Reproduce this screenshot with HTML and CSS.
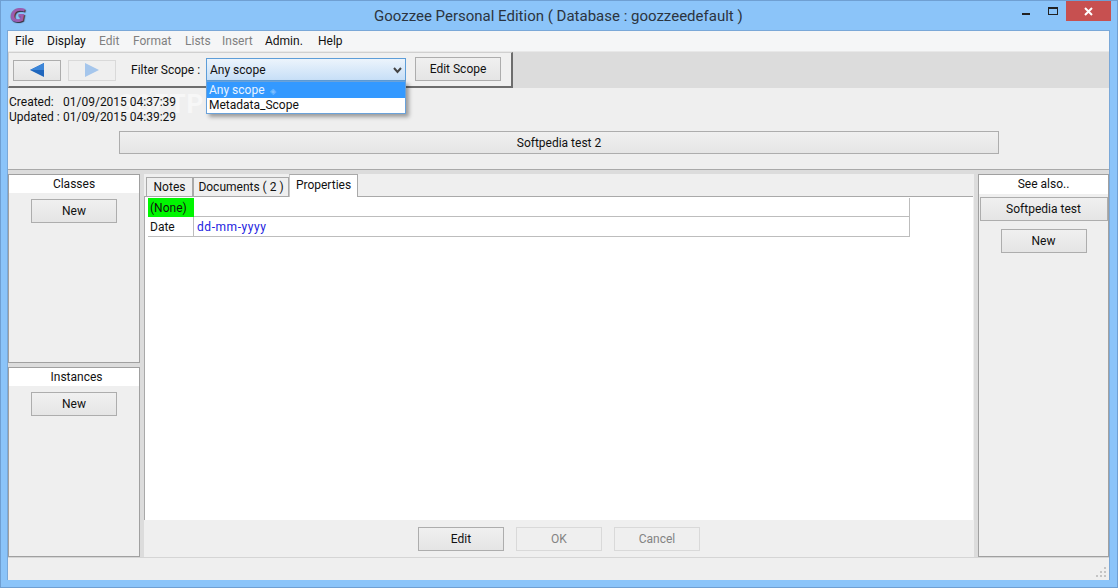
FILE: index.html
```html
<!DOCTYPE html>
<html lang="en">
<head>
<meta charset="utf-8">
<title>Goozzee Personal Edition</title>
<link rel="stylesheet" href="styles.css">
</head>
<body>
<div class="window">
  <header class="titlebar">
    <span class="logo">G</span>
    <h1 class="title">Goozzee Personal Edition ( Database : goozzeedefault )</h1>
    <div class="controls">
      <span class="ctl ctl-min"><i class="min-bar"></i></span>
      <span class="ctl ctl-max"><i class="max-box"></i></span>
      <span class="ctl ctl-close">
        <svg width="9" height="9" viewBox="0 0 9 9"><path d="M1 1l7 7M8 1l-7 7" stroke="#fff" stroke-width="2" fill="none"/></svg>
      </span>
    </div>
  </header>
  <div class="client">
    <nav class="menubar">
      <span class="menu m-file">File</span>
      <span class="menu m-display">Display</span>
      <span class="menu off m-edit">Edit</span>
      <span class="menu off m-format">Format</span>
      <span class="menu off m-lists">Lists</span>
      <span class="menu off m-insert">Insert</span>
      <span class="menu m-admin">Admin.</span>
      <span class="menu">Help</span>
    </nav>
    <div class="toolstrip">
      <div class="toolgroup">
        <button class="btn nav">
          <svg width="14" height="14" viewBox="0 0 14 14"><polygon points="14,0 14,14 0,7" fill="#1f66bd"/><polygon points="14,0 14,7 0,7" fill="#3d86d8"/></svg>
        </button>
        <button class="btn nav disabled">
          <svg width="14" height="14" viewBox="0 0 14 14"><polygon points="0,0 0,14 14,7" fill="#a5c6ec"/></svg>
        </button>
        <span class="filter-label">Filter Scope :</span>
        <div class="combo">
          <span>Any scope</span>
          <svg class="chev" width="9" height="7" viewBox="0 0 9 7"><path d="M1 1l3.5 4L8 1" stroke="#444" stroke-width="2" fill="none"/></svg>
          <ul class="dropdown">
            <li class="sel">Any scope<span class="dia">◈</span></li>
            <li>Metadata_Scope</li>
          </ul>
        </div>
        <button class="btn edit-scope">Edit Scope</button>
      </div>
    </div>
    <section class="info">
      <span class="watermark">SOFTPEDIA</span>
      <div class="stamps">
        <div class="stamp"><span class="stamp-k">Created:</span><span>01/09/2015 04:37:39</span></div>
        <div class="stamp"><span class="stamp-k">Updated :</span><span>01/09/2015 04:39:29</span></div>
      </div>
      <button class="btn name-btn">Softpedia test 2</button>
    </section>
    <main class="columns">
      <aside class="left">
        <section class="panel classes">
          <div class="panel-head">Classes</div>
          <button class="btn new">New</button>
        </section>
        <section class="panel instances">
          <div class="panel-head">Instances</div>
          <button class="btn new">New</button>
        </section>
      </aside>
      <section class="center">
        <div class="center-inner">
          <div class="tabs">
            <span class="tab t-notes">Notes</span>
            <span class="tab t-docs">Documents ( 2 )</span>
            <span class="tab active">Properties</span>
          </div>
          <div class="page">
            <div class="prop-table">
              <div class="cell key none">(None)</div><div class="cell val"></div>
              <div class="cell key">Date</div><div class="cell val link">dd-mm-yyyy</div>
            </div>
          </div>
          <div class="actions">
            <button class="btn act">Edit</button>
            <button class="btn act disabled">OK</button>
            <button class="btn act disabled">Cancel</button>
          </div>
        </div>
      </section>
      <aside class="panel right">
        <div class="panel-head see">See also..</div>
        <button class="btn see-item">Softpedia test</button>
        <button class="btn new see-new">New</button>
      </aside>
    </main>
    <footer class="statusbar">
      <svg class="grip" width="11" height="11" viewBox="0 0 11 11" fill="#c4c4c4"><rect x="8" y="0" width="2" height="2"/><rect x="4" y="4" width="2" height="2"/><rect x="8" y="4" width="2" height="2"/><rect x="0" y="8" width="2" height="2"/><rect x="4" y="8" width="2" height="2"/><rect x="8" y="8" width="2" height="2"/></svg>
    </footer>
  </div>
</div>
</body>
</html>
```
FILE: styles.css
```css
* { box-sizing: border-box; }
html, body { margin: 0; padding: 0; }
body {
  width: 1118px;
  height: 588px;
  overflow: hidden;
  font-family: Roboto, "Noto Sans", sans-serif;
  font-size: 12px;
  color: #111;
}
button { font: inherit; color: inherit; padding: 0; }

.window {
  width: 1118px;
  height: 588px;
  background: #8bc4f9;
  border: 1px solid #6f9fd2;
  display: flex;
  flex-direction: column;
  padding: 0 7px 7px 6px;
}

.titlebar {
  height: 29px;
  flex: none;
  display: flex;
  align-items: flex-start;
  position: relative;
}
.logo {
  width: 18px;
  margin: 4px 0 0 3px;
  font: italic bold 19px/20px "DejaVu Sans", sans-serif;
  color: #9a5cb0;
  text-shadow: 1px 1px 1px #2b2b3a;
}
.title {
  position: absolute;
  left: 367px;
  top: 5px;
  margin: 0;
  font-size: 15px;
  line-height: 20px;
  font-weight: 400;
  color: #2b3440;
  white-space: nowrap;
}
.controls { margin-left: auto; display: flex; margin-right: -1px; }
.ctl { height: 20px; display: flex; align-items: center; justify-content: center; }
.ctl-min { width: 8px; margin-right: 18px; }
.ctl-max { width: 10px; margin-right: 8px; }
.ctl-close { width: 45px; background: #c75050; }
.min-bar { width: 8px; height: 2px; background: #222; margin-top: 6px; }
.max-box { width: 10px; height: 8px; border: 1px solid #222; border-top-width: 2px; }

.client {
  flex: 1;
  display: flex;
  flex-direction: column;
  background: #efefef;
  border: 1px solid #7aa8d8;
  border-bottom: 0;
  min-height: 0;
}

.menubar {
  height: 20px;
  flex: none;
  display: flex;
  align-items: center;
  padding-left: 7px;
  background: #f5f6f7;
}
.menu.off { color: #808080; }
.m-file { width: 32px; }
.m-display { width: 52px; }
.m-edit { width: 34px; }
.m-format { width: 52px; }
.m-lists { width: 37px; }
.m-insert { width: 43px; }
.m-admin { width: 53px; }

.btn {
  display: flex;
  align-items: center;
  justify-content: center;
  background: linear-gradient(#f0f0f0, #e5e5e5);
  border: 1px solid #adadad;
}
.btn.disabled {
  background: #efefef;
  border-color: #d9d9d9;
  color: #838383;
}

.toolstrip {
  height: 37px;
  flex: none;
  background: #dcdcdc;
  border-top: 1px solid #e8e8e8;
}
.toolgroup {
  width: 505px;
  height: 36px;
  background: #f0f0f0;
  border: 1px solid #d0d0d0;
  border-right: 2px solid #6d6d6d;
  border-bottom: 2px solid #6d6d6d;
  display: flex;
  align-items: center;
  padding-left: 4px;
}
.nav { width: 48px; height: 21px; margin-right: 7px; margin-top: 1px; }
.nav.disabled { margin-right: 15px; }
.filter-label { width: 75px; flex: none; }
.combo {
  position: relative;
  width: 200px;
  height: 23px;
  flex: none;
  display: flex;
  align-items: center;
  padding-left: 3px;
  background: linear-gradient(#ecf4fc, #c7dff7);
  border: 1px solid #5d9dd8;
}
.chev { position: absolute; right: 3px; top: 8px; }
.dropdown {
  position: absolute;
  left: -1px;
  top: 22px;
  width: 200px;
  margin: 0;
  padding: 0;
  list-style: none;
  background: #fff;
  border: 1px solid #6aa2da;
  box-shadow: 3px 3px 4px rgba(0,0,0,.35);
  z-index: 5;
}
.dropdown li { height: 15px; line-height: 15px; padding-left: 2px; }
.dropdown li.sel { height: 16px; line-height: 17px; background: #3399ff; color: #e8f3ff; }
.dia { margin-left: 5px; font-size: 8px; color: #7fc0ff; }
.edit-scope { width: 86px; height: 24px; margin: -1px 0 0 9px; }

.info {
  height: 82px;
  flex: none;
  position: relative;
  background: #efefef;
  border-bottom: 1px solid #a9a9a9;
  display: flex;
  flex-direction: column;
}
.stamps { padding: 7px 0 0 1px; height: 43px; position: relative; }
.stamp { display: flex; height: 15px; line-height: 15px; white-space: nowrap; }
.stamp-k { width: 54px; flex: none; }
.name-btn { width: 880px; height: 23px; margin-left: 111px; flex: none; }
.watermark {
  position: absolute;
  left: 110px;
  top: 1px;
  font-size: 26px;
  font-weight: 700;
  color: rgba(255,255,255,.5);
  letter-spacing: 1px;
}

.columns {
  flex: 1;
  display: flex;
  min-height: 0;
  background: #dcdcdc;
  padding-top: 4px;
}
.left {
  width: 132px;
  flex: none;
  display: flex;
  flex-direction: column;
  gap: 4px;
}
.panel {
  background: #efefef;
  border: 1px solid #a0a0a0;
  display: flex;
  flex-direction: column;
  align-items: center;
}
.classes { height: 189px; }
.instances { height: 190px; }
.panel-head {
  align-self: stretch;
  height: 18px;
  background: #fff;
  text-align: center;
  line-height: 19px;
}
.instances .panel-head { padding-left: 5px; }
.new { width: 86px; height: 24px; margin-top: 6px; }

.center { flex: 1; padding: 0 4px; min-width: 0; }
.center-inner {
  height: 383px;
  background: #efefef;
  display: flex;
  flex-direction: column;
}
.tabs { height: 22px; flex: none; display: flex; align-items: flex-end; padding-left: 2px; }
.tab {
  display: flex;
  align-items: center;
  justify-content: center;
  height: 19px;
  background: #efefef;
  border: 1px solid #a9a9a9;
  border-bottom: 0;
}
.t-notes { width: 48px; border-right-width: 2px; }
.t-docs { width: 95px; border-left: 0; }
.active {
  width: 69px;
  height: 23px;
  background: #fff;
  padding-bottom: 3px;
  position: relative;
  top: 1px;
  z-index: 2;
  border-left-color: #c8c8c8;
}
.page {
  height: 324px;
  flex: none;
  margin-right: 1px;
  background: #fff;
  border-top: 1px solid #a9a9a9;
  border-left: 1px solid #a9a9a9;
  padding: 1px 0 0 3px;
}
.prop-table {
  width: 762px;
  display: grid;
  grid-template-columns: 46px 716px;
  grid-auto-rows: 19px;
  border-right: 1px solid #bdbdbd;
  border-bottom: 1px solid #bdbdbd;
}
.cell { display: flex; align-items: center; padding-left: 2px; border-bottom: 1px solid #bdbdbd; }
.cell:nth-last-child(-n+2) { border-bottom: 0; }
.key { border-right: 1px solid #bdbdbd; }
.none { background: #00f600; border-right: 0; border-bottom: 0; }
.link { color: #2222e0; letter-spacing: .55px; padding-left: 3px; }
.actions {
  flex: 1;
  display: flex;
  justify-content: flex-start;
  gap: 12px;
  padding: 7px 0 0 274px;
}
.act { width: 86px; height: 24px; }

.right { width: 131px; flex: none; height: 383px; }
.see { height: 19px; line-height: 19px; }
.see-item { width: 128px; height: 24px; margin-top: 3px; }
.see-new { margin-top: 8px; }

.statusbar {
  height: 23px;
  flex: none;
  position: relative;
  background: #efefef;
  border-top: 1px solid #d5d5d5;
}
.grip { position: absolute; right: 2px; bottom: 2px; }
```
